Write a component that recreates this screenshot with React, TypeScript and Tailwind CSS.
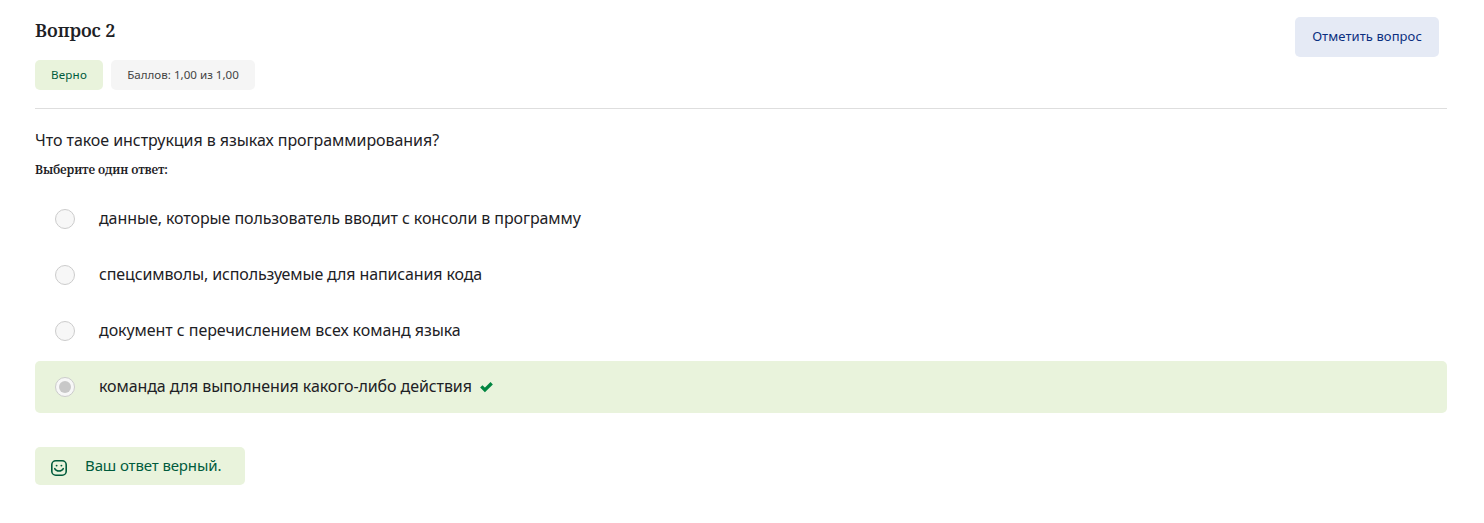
import React from "react";

const answers = [
  { text: "данные, которые пользователь вводит с консоли в программу", spacing: "tracking-[-0.09px]" },
  { text: "спецсимволы, используемые для написания кода", spacing: "tracking-[-0.13px]" },
  { text: "документ с перечислением всех команд языка", spacing: "tracking-[-0.06px]" },
  { text: "команда для выполнения какого-либо действия", spacing: "tracking-[-0.09px]", selected: true },
];

function CheckIcon() {
  return (
    <svg className="ml-2 h-3 w-[13px]" viewBox="0 0 13 12" fill="none" aria-hidden="true">
      <path d="m1.3 5.4 3.6 3.5 6.8-6.7" stroke="#008540" strokeWidth="3.3" />
    </svg>
  );
}

function SmileIcon() {
  return (
    <svg className="mt-1 size-4 shrink-0" viewBox="0 0 16 16" fill="none" stroke="currentColor" aria-hidden="true">
      <rect x=".8" y=".8" width="14.4" height="14.4" rx="4" strokeWidth="1.6" />
      <path d="M3.7 8.6C5.4 11.8 10.6 11.8 12.3 8.6" strokeWidth="1.5" strokeLinecap="round" />
      <g fill="currentColor" stroke="none"><circle cx="5.6" cy="5.6" r=".95" /><circle cx="10.4" cy="5.6" r=".95" /></g>
    </svg>
  );
}

export default function App() {
  return (
    <main className="h-[523px] w-full overflow-hidden bg-white pl-[35px] pr-[37px] pt-[17px] font-['Noto_Sans',sans-serif] text-[#1d2125]">
      <header className="flex h-[92px] justify-between border-b border-[#dedede]">
        <div>
          <h1 className="h-[43px] whitespace-nowrap font-['Noto_Serif',serif] text-[18px] font-semibold leading-[26px] tracking-[-0.1px]">Вопрос 2</h1>
          <div className="flex gap-2 text-[11.6px] leading-[30px]">
            <span className="h-[30px] w-[68px] rounded-[5px] bg-[#e9f3dc] text-center tracking-[0.25px] text-[#005b3c]">Верно</span>
            <span className="h-[30px] w-[144px] rounded-[5px] bg-[#f5f5f5] text-center text-[#444]">Баллов: 1,00 из 1,00</span>
          </div>
        </div>
        <button className="mr-2 h-10 w-36 rounded-[5px] bg-[#e5eaf5] text-[13px] tracking-[0.08px] text-[#0b2f80]">Отметить вопрос</button>
      </header>
      <p className="mt-[19px] text-[16px] leading-6 tracking-[-0.05px]">Что такое инструкция в языках программирования?</p>
      <p className="mt-[9px] h-[18px] whitespace-nowrap font-['Noto_Serif',serif] text-[12px] font-semibold leading-[18px] tracking-[-0.15px]">Выберите один ответ:</p>
      <div className="mt-[14px] flex flex-col gap-1">
        {answers.map((a) => (
          <div key={a.text} className={`flex h-[52px] items-center rounded-[5px] pl-5 ${a.selected ? "bg-[#e9f3dc]" : ""}`}>
            <span className="mr-6 flex size-5 items-center justify-center rounded-full border border-[#ccc] bg-[#f7f7f7]">
              {a.selected && <span className="size-3 rounded-full bg-[#c8c8c8]" />}
            </span>
            <span className={`pb-0.5 text-[16px] ${a.spacing}`}>{a.text}</span>
            {a.selected && <CheckIcon />}
          </div>
        ))}
      </div>
      <div className="mt-[34px] flex h-[38px] w-[210px] items-center gap-[18px] whitespace-nowrap rounded-[5px] bg-[#e9f3dc] pl-4 text-[15px] tracking-[-0.12px] text-[#005b3c]">
        <SmileIcon />
        <span className="pb-0.5">Ваш ответ верный.</span>
      </div>
    </main>
  );
}
